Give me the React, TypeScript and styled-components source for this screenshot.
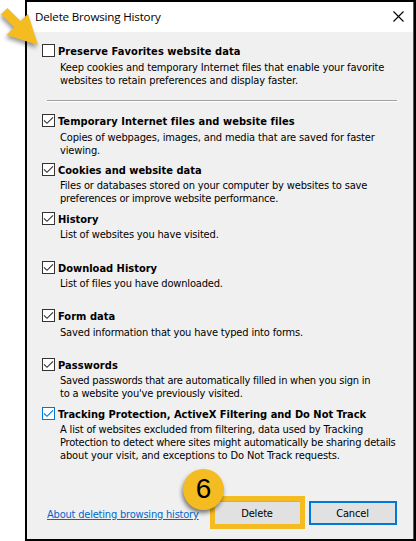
import React from 'react';
import styled, { createGlobalStyle } from 'styled-components';

const GlobalStyle = createGlobalStyle`
  * { box-sizing: border-box; }
  body { margin: 0; background: #fff; }
`;

const Stage = styled.main`
  position: relative;
  width: 416px;
  height: 541px;
  padding-left: 25px;
  overflow: hidden;
  font-family: "DejaVu Sans Condensed", "DejaVu Sans", sans-serif;
  font-size: 11px;
  line-height: 13px;
  color: #000;
`;

const Dialog = styled.section`
  display: flex;
  flex-direction: column;
  width: 391px;
  height: 541px;
  border: 2px solid #000;
  background: #f0f0f0;
  box-shadow: inset -1px 0 0 #0d6ab8;
`;

const TitleBar = styled.header`
  display: flex;
  align-items: center;
  justify-content: space-between;
  height: 30px;
  margin-right: 1px;
  padding: 0 9px 1px 8px;
  background: #fff;
`;

const Title = styled.h1`
  margin: 0;
  font: 400 11.6px/16px "Open Sans", sans-serif;
  letter-spacing: -0.18px;
  white-space: nowrap;
`;

const CloseButton = styled.button`
  display: flex;
  padding: 0;
  border: 0;
  background: none;
`;

const Options = styled.div`
  display: grid;
  grid-template-rows: 70px 49px 49px 49px 48px 49px 49px 64px;
  height: 464px;
  padding: 12px 0 0 15px;
`;

const Option = styled.div`
  display: grid;
  grid-template-columns: 13px 1fr;
  column-gap: 3px;
  align-content: start;
`;

const CheckBox = styled.span<{ $active?: boolean }>`
  display: block;
  width: 13px;
  height: 13px;
  border: 1px solid ${(p) => (p.$active ? '#0078d7' : '#333')};
  background: #fff;
  color: ${(p) => (p.$active ? '#0078d7' : '#333')};
  svg { display: block; }
`;

const Heading = styled.strong<{ $track: number }>`
  font-weight: 700;
  line-height: 15px;
  letter-spacing: ${(p) => p.$track}px;
  white-space: nowrap;
`;

const Description = styled.p<{ $drop: number }>`
  grid-column: 2;
  margin: ${(p) => p.$drop}px 0 0 2px;
`;

const Line = styled.span<{ $track: number }>`
  display: block;
  letter-spacing: ${(p) => p.$track}px;
  white-space: nowrap;
`;

const Divider = styled.hr`
  grid-column: 1 / -1;
  width: 350px;
  height: 2px;
  margin: 13px 0 0 5px;
  border: 0;
  border-top: 1px solid #a0a0a0;
  background: #fff;
`;

const Footer = styled.footer`
  display: flex;
  align-items: flex-start;
  padding-left: 20px;
`;

const HelpLink = styled.a`
  width: 163px;
  margin-top: 12px;
  color: #0066cc;
  letter-spacing: -0.2px;
  text-decoration: underline;
  text-underline-offset: 1px;
  white-space: nowrap;
`;

const Button = styled.button<{ $primary?: boolean }>`
  width: ${(p) => (p.$primary ? 95 : 88)}px;
  height: ${(p) => (p.$primary ? 33 : 24)}px;
  margin: ${(p) => (p.$primary ? '0 4px 0 0' : '5px 0 0')};
  padding: ${(p) => (p.$primary ? '1px 1px 0 0' : '0 1px 0 0')};
  border: ${(p) => (p.$primary ? '5px solid #f5bc22' : '2px solid #0078d7')};
  box-shadow: ${(p) => (p.$primary ? 'inset 0 1px 0 #adadad' : 'none')};
  background: #e1e1e1;
  color: #000;
  font: inherit;
  letter-spacing: -0.15px;
`;

const StepBadge = styled.div`
  position: absolute;
  left: 183px;
  top: 469px;
  display: flex;
  justify-content: center;
  width: 41px;
  height: 41px;
  border-radius: 50%;
  background: #f5bc22;
  box-shadow: -1px 3px 4px rgba(0, 0, 0, 0.5);
  font: 28px/40px "Liberation Sans", Arial, sans-serif;
`;

const Pointer = styled.svg`
  position: absolute;
  left: 0;
  top: 0;
  filter: drop-shadow(-1px 3px 2px rgba(0, 0, 0, 0.4));
`;

type Text = [string, number];
interface Item {
  title: Text;
  lines: Text[];
  drop: number;
  checked?: boolean;
  active?: boolean;
  divider?: boolean;
}

const items: Item[] = [
  {
    title: ['Preserve Favorites website data', 0.07],
    lines: [
      ['Keep cookies and temporary Internet files that enable your favorite', -0.15],
      ['websites to retain preferences and display faster.', -0.13],
    ],
    drop: 2,
    divider: true,
  },
  {
    title: ['Temporary Internet files and website files', 0.07],
    lines: [['Copies of webpages, images, and media that are saved for faster', -0.15], ['viewing.', -0.14]],
    drop: 2,
    checked: true,
  },
  {
    title: ['Cookies and website data', 0.01],
    lines: [['Files or databases stored on your computer by websites to save', -0.15], ['preferences or improve website performance.', -0.2]],
    drop: 1,
    checked: true,
  },
  { title: ['History', 0], lines: [['List of websites you have visited.', -0.17]], drop: 1, checked: true },
  { title: ['Download History', 0], lines: [['List of files you have downloaded.', -0.17]], drop: 1, checked: true },
  { title: ['Form data', 0.04], lines: [['Saved information that you have typed into forms.', -0.16]], drop: 2, checked: true },
  {
    title: ['Passwords', 0.07],
    lines: [['Saved passwords that are automatically filled in when you sign in', -0.23], ["to a website you've previously visited.", -0.18]],
    drop: 1,
    checked: true,
  },
  {
    title: ['Tracking Protection, ActiveX Filtering and Do Not Track', 0],
    lines: [
      ['A list of websites excluded from filtering, data used by Tracking', -0.17],
      ['Protection to detect where sites might automatically be sharing details', -0.23],
      ['about your visit, and exceptions to Do Not Track requests.', -0.13],
    ],
    drop: 1,
    checked: true,
    active: true,
  },
];

const CheckMark = () => (
  <svg width="11" height="11" viewBox="0 0 11 11" fill="none" stroke="currentColor" strokeWidth="1.15">
    <path d="M1 5.3 4 8.3 10 2.3" />
  </svg>
);

export default function App() {
  return (
    <>
      <GlobalStyle />
      <Stage>
        <Dialog>
          <TitleBar>
            <Title>Delete Browsing History</Title>
            <CloseButton aria-label="Close">
              <svg width="11" height="11" viewBox="0 0 11 11" stroke="#000" strokeWidth="1.1">
                <path d="M.5.5l10 10M10.5.5l-10 10" />
              </svg>
            </CloseButton>
          </TitleBar>
          <Options>
            {items.map((item) => (
              <Option key={item.title[0]}>
                <CheckBox $active={item.active}>{item.checked && <CheckMark />}</CheckBox>
                <Heading $track={item.title[1]}>{item.title[0]}</Heading>
                <Description $drop={item.drop}>
                  {item.lines.map(([text, track]) => (
                    <Line key={text} $track={track}>{text}</Line>
                  ))}
                </Description>
                {item.divider && <Divider />}
              </Option>
            ))}
          </Options>
          <Footer>
            <HelpLink>About deleting browsing history</HelpLink>
            <Button $primary>Delete</Button>
            <Button>Cancel</Button>
          </Footer>
        </Dialog>
        <StepBadge>6</StepBadge>
        <Pointer width="60" height="60" viewBox="0 0 60 60" aria-hidden="true">
          <path fill="#f5bc22" d="M7.5 8 20.6 21 28 13.7 38 45 6.5 35 14.2 27.3 1 14.2Z" />
        </Pointer>
      </Stage>
    </>
  );
}
